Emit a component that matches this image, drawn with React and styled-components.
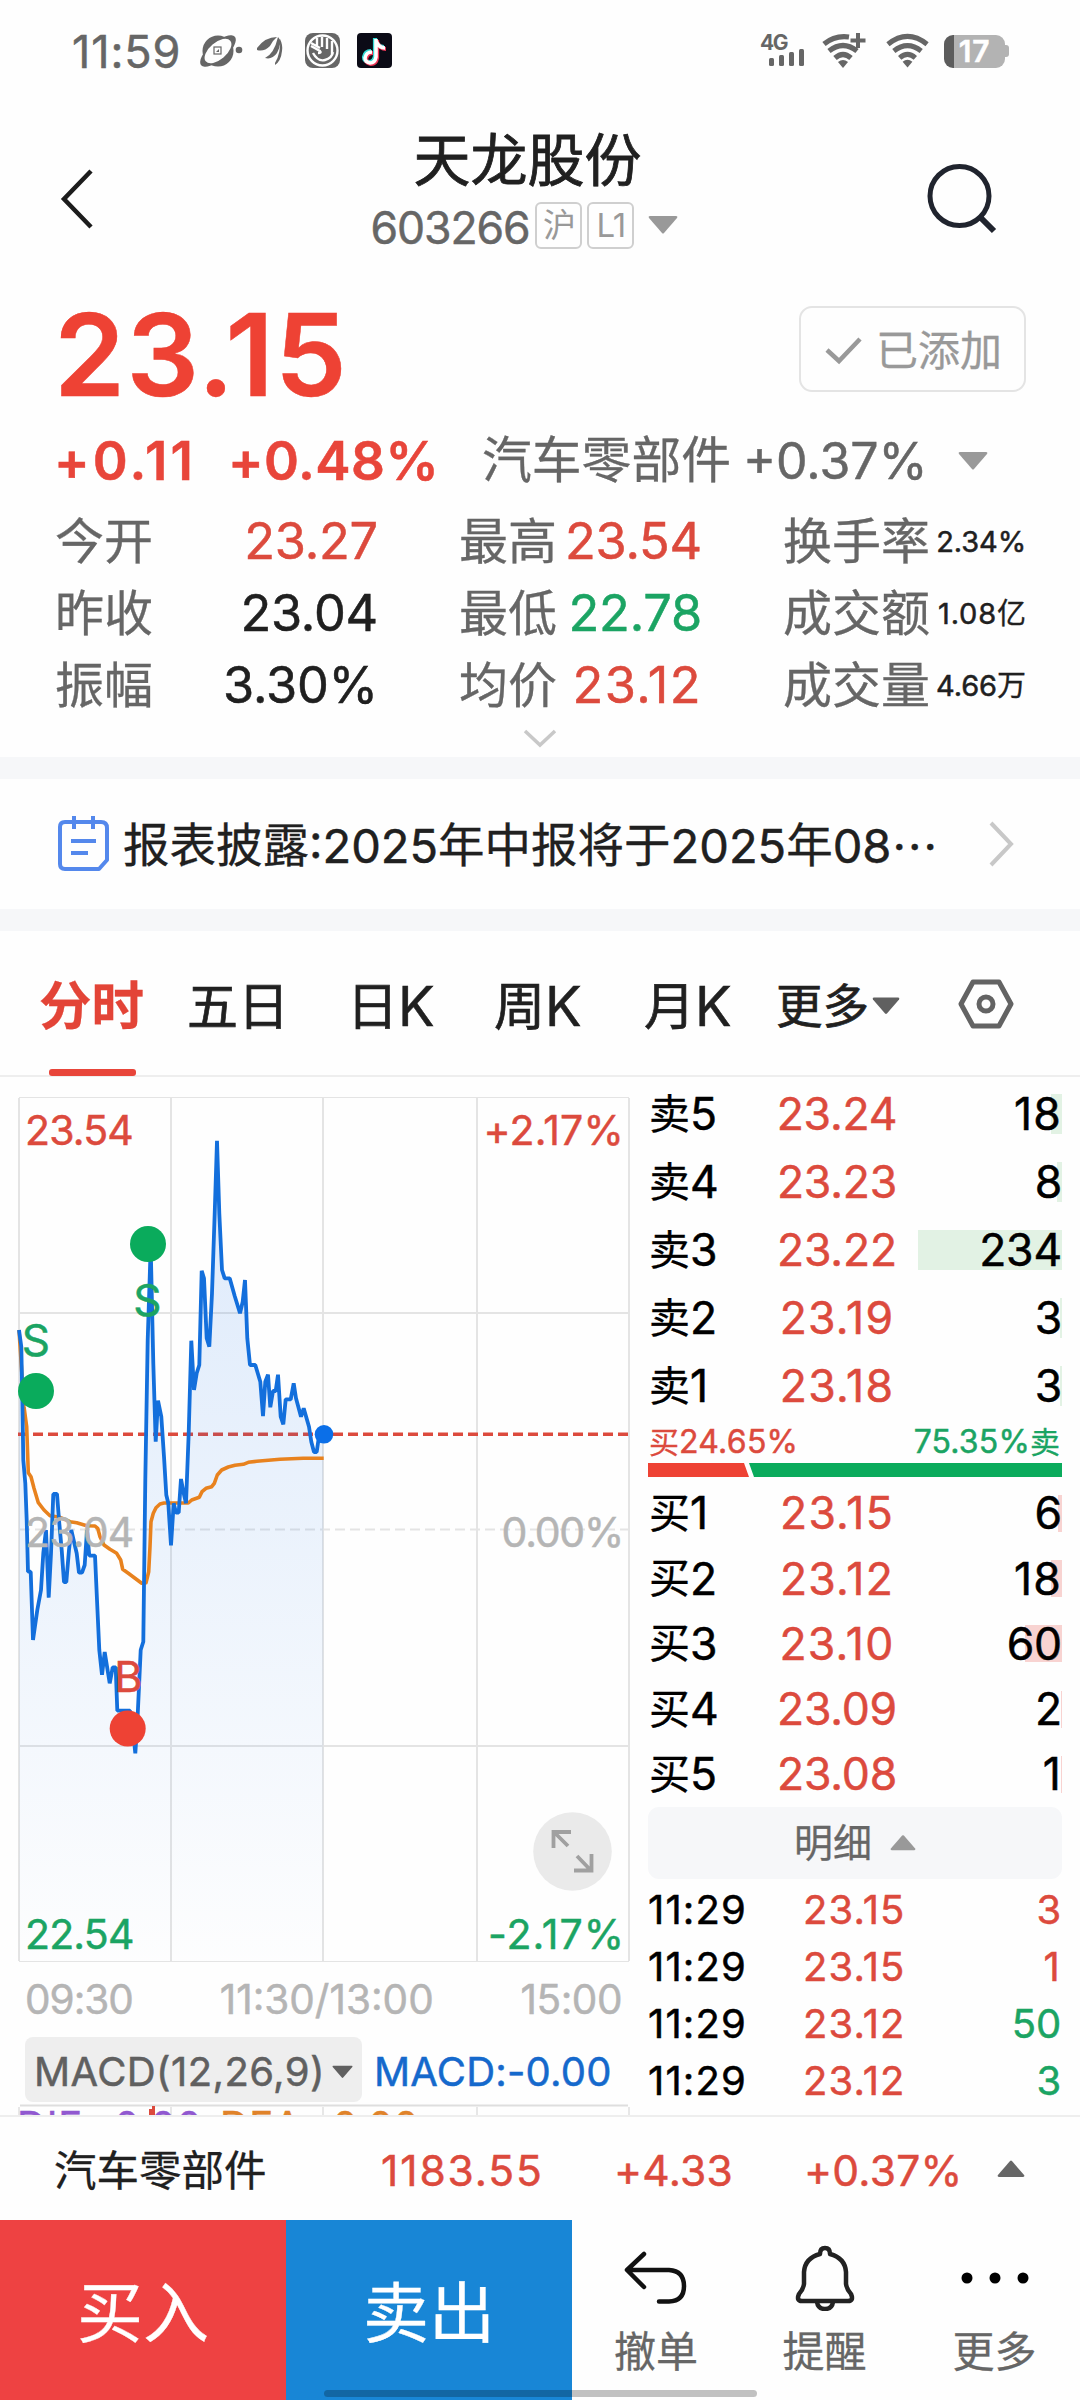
import React from "react";
import styled, { createGlobalStyle } from "styled-components";

const RED = "#dc4a3d";
const GREEN = "#1ba463";
const INK = "#202020";
const GRAY = "#666666";

const Global = createGlobalStyle`
  * { box-sizing: border-box; }
  body {
    margin: 0;
    background: #ffffff;
    font-family: Inter, "Noto Sans CJK SC", sans-serif;
    color: ${INK};
  }
  svg { display: block; flex: none; }
`;

const Screen = styled.div`
  width: 1080px;
  height: 2400px;
  overflow: hidden;
  background: #fefefe;
  display: flex;
  flex-direction: column;
`;

const Digits = styled.span`
  font-size: ${(p) => p.$size}px;
  line-height: 1;
  font-weight: ${(p) => p.$weight || 400};
  color: ${(p) => p.$color || "inherit"};
  letter-spacing: ${(p) => p.$ls}em;
  white-space: nowrap;
  -webkit-text-stroke: 0.5px;
`;

/* The figure "1" is narrow, so numbers that contain it are tracked wider. */
const Num = ({ $ls, children, ...rest }) => (
  <Digits $ls={$ls === undefined ? (/1/.test(children) ? 0.028 : -0.004) : $ls} {...rest}>
    {children}
  </Digits>
);

const Han = styled.span`
  font-size: ${(p) => p.$size}px;
  line-height: 1;
  font-weight: ${(p) => p.$weight || 400};
  color: ${(p) => p.$color || "inherit"};
  white-space: nowrap;
  -webkit-text-stroke: ${(p) => p.$stroke || 0.3}px;
`;

/* status bar */
const StatusBar = styled.div`
  height: 102px;
  padding: 0 71px 0 72px;
  display: flex;
  align-items: center;
  justify-content: space-between;
  color: ${GRAY};
`;
const StatusGroup = styled.div`
  display: flex;
  align-items: center;
`;
const ClockBox = styled.div`
  width: 127px;
  display: flex;
`;
const Battery = styled.div`
  width: 61px;
  height: 33px;
  border-radius: 9px;
  background: linear-gradient(90deg, #5c5c5c 10px, #b3b3b3 10px);
  color: #ffffff;
  display: flex;
  align-items: center;
  justify-content: center;
`;
const BatteryTip = styled.div`
  width: 4px;
  height: 12px;
  border-radius: 0 3px 3px 0;
  background: #b3b3b3;
`;

/* header */
const Header = styled.header`
  height: 178px;
  padding: 0 83px 0 60px;
  display: flex;
  justify-content: space-between;
  align-items: flex-start;
`;
const BackBox = styled.div`
  width: 302px;
  padding-top: 67px;
`;
const TitleBox = styled.div`
  width: 310px;
  display: flex;
  flex-direction: column;
  align-items: center;
`;
const Title = styled(Han)`
  margin: 30px 0 0 6px;
  line-height: 58px;
`;
const CodeRow = styled.div`
  height: 50px;
  margin-top: 10px;
  display: flex;
  align-items: center;
  color: ${GRAY};
`;
const Code = styled.div`
  padding-top: 7px;
  display: flex;
`;
const Badge = styled.span`
  width: 47px;
  height: 47px;
  margin-left: ${(p) => p.$gap}px;
  border: 2px solid #cfcfcf;
  border-radius: 6px;
  display: flex;
  align-items: center;
  justify-content: center;
  color: #999999;
  font-size: 33px;
  line-height: 1;
  letter-spacing: -0.03em;
`;
const SearchBox = styled.div`
  width: 310px;
  padding-top: 61px;
  display: flex;
  justify-content: flex-end;
`;

/* quote */
const Quote = styled.section`
  height: 477px;
  padding: 0 54px 0 54px;
`;
const PriceRow = styled.div`
  height: 150px;
  display: flex;
  align-items: center;
  justify-content: space-between;
`;
const AddedButton = styled.button`
  width: 227px;
  height: 86px;
  margin: -12px 0 0;
  padding: 4px 22px 0 24px;
  border: 2px solid #e4e4e4;
  border-radius: 13px;
  background: transparent;
  font-family: inherit;
  color: #999999;
  display: flex;
  align-items: center;
  justify-content: space-between;
`;
const ChangeRow = styled.div`
  height: 62px;
  display: flex;
  align-items: center;
  color: ${GRAY};
`;
const ChangeCell = styled.div`
  width: ${(p) => p.$w}px;
  display: flex;
  align-items: center;
`;
const Stats = styled.div`
  margin-top: 13px;
  padding-left: 1px;
  display: grid;
  grid-template-columns: 323px 243px 243px;
  grid-auto-rows: 72px;
  column-gap: 81px;
`;
const Stat = styled.div`
  display: flex;
  align-items: center;
  justify-content: space-between;
  color: ${GRAY};
`;
const ExpandRow = styled.div`
  height: 36px;
  display: flex;
  align-items: center;
  justify-content: center;
`;
const Divider = styled.div`
  height: 22px;
  background: #f6f7f9;
`;

const Notice = styled.section`
  height: 130px;
  padding: 0 65px 0 57px;
  display: flex;
  align-items: center;
`;
const NoticeText = styled.div`
  flex: 1;
  margin-left: 14px;
  padding-top: 3px;
  display: flex;
  align-items: center;
`;
const Dots = styled(Han)`
  font-family: "Noto Sans CJK SC", sans-serif;
`;

/* tabs */
const Tabs = styled.nav`
  height: 146px;
  padding-left: 39px;
  border-bottom: 2px solid #eeeeee;
  display: grid;
  grid-template-columns: 148px 160px 147px 150px 132px 182px 60px;
`;
const Tab = styled.div`
  position: relative;
  height: 146px;
  padding-top: ${(p) => (p.$icon ? 0 : 4)}px;
  display: flex;
  align-items: center;
  color: ${(p) => (p.$active ? "#e34437" : INK)};
  &::after {
    content: "";
    display: ${(p) => (p.$active ? "block" : "none")};
    position: absolute;
    left: 10px;
    bottom: 1px;
    width: 87px;
    height: 7px;
    border-radius: 3px;
    background: #e8453a;
  }
`;

/* main */
const Main = styled.section`
  height: 1040px;
  border-bottom: 2px solid #eeeeee;
  overflow: hidden;
  display: flex;
`;
const ChartPane = styled.div`
  width: 648px;
`;
const Axis = styled.div`
  height: 66px;
  padding: 0 26px 0 25px;
  display: flex;
  align-items: center;
  justify-content: space-between;
  color: #b5b5b5;
`;
const MacdRow = styled.div`
  margin-top: 4px;
  height: 65px;
  padding-left: 25px;
  display: flex;
  align-items: center;
`;
const MacdPill = styled.div`
  width: 337px;
  height: 65px;
  margin-right: 12px;
  padding: 5px 9px 0 9px;
  border-radius: 8px;
  background: #eeeeee;
  color: #606060;
  display: flex;
  align-items: center;
  justify-content: space-between;
`;
const MacdValue = styled.div`
  padding-top: 5px;
  display: flex;
`;
const SubChart = styled.svg`
  margin-top: 2px;
`;

const Book = styled.div`
  width: 414px;
  padding-top: 3px;
  color: #000000;
`;
const Level = styled.div`
  height: ${(p) => p.$h}px;
  display: grid;
  grid-template-columns: 104px 170px 140px;
  align-items: center;
`;
const LevelName = styled.div`
  display: flex;
  align-items: center;
  padding-left: 1px;
`;
const LevelPrice = styled.div`
  color: ${RED};
  display: flex;
  justify-content: center;
`;
const Volume = styled.div`
  width: 144px;
  height: ${(p) => p.$barH}px;
  margin-left: -4px;
  background: linear-gradient(${(p) => p.$tint}, ${(p) => p.$tint}) right / ${(p) => p.$bar}px 100% no-repeat;
  display: flex;
  align-items: center;
  justify-content: flex-end;
`;
const Ratio = styled.div`
  height: 43px;
  padding: 0 2px 0 1px;
  display: flex;
  align-items: center;
  justify-content: space-between;
`;
const RatioSide = styled.div`
  display: flex;
  align-items: center;
  color: ${(p) => p.$color};
`;
const Buys = styled.div`
  margin-top: 4px;
`;
const DetailToggle = styled.div`
  height: 72px;
  border-radius: 11px;
  background: #f6f7f9;
  color: ${GRAY};
  display: flex;
  align-items: center;
  justify-content: center;
  gap: 18px;
`;
const Trades = styled.div`
  margin-top: 2px;
`;
const Trade = styled.div`
  height: 57.3px;
  padding-right: 1px;
  display: grid;
  grid-template-columns: 155px 105px 153px;
  align-items: center;
`;
const TradeVol = styled.div`
  display: flex;
  justify-content: flex-end;
  color: ${(p) => p.$color};
`;

/* index strip */
const IndexBar = styled.section`
  height: 103px;
  padding: 6px 0 0 54px;
  display: grid;
  grid-template-columns: 327px 233px 190px 193px 40px;
  align-items: center;
  color: ${RED};
`;
const IndexName = styled(Han)`
  color: ${INK};
`;
const IndexArrow = styled.div`
  margin-top: -7px;
`;

/* bottom bar */
const BottomBar = styled.footer`
  position: relative;
  height: 180px;
  display: grid;
  grid-template-columns: 286px 286px 168px 169px 171px;
`;
const TradeButton = styled.button`
  border: 0;
  padding: 6px 0 0;
  background: ${(p) => p.$bg};
  color: #ffffff;
  font-family: inherit;
  display: flex;
  align-items: center;
  justify-content: center;
`;
const Action = styled.div`
  display: flex;
  flex-direction: column;
  align-items: center;
  color: ${GRAY};
`;
const ActionIcon = styled.div`
  height: 111px;
  padding-top: 4px;
  display: flex;
  align-items: center;
`;
const HomeIndicator = styled.div`
  position: absolute;
  left: 324px;
  bottom: 3px;
  width: 433px;
  height: 7px;
  border-radius: 4px;
  background: rgba(0, 0, 0, 0.24);
`;

const Triangle = ({ up, w = 30, h = 18, color = "#999999" }) => (
  <svg width={w} height={h} viewBox="0 0 30 18">
    <path d={up ? "M2 18h26q2 0 1-2L16 1q-1-1-2 0L1 16q-1 2 1 2z" : "M2 0h26q2 0 1 2L16 17q-1 1-2 0L1 2Q0 0 2 0z"} fill={color} />
  </svg>
);

const WifiIcon = ({ plus }) => (
  <svg width={plus ? 45 : 44} height="36" viewBox="0 0 45 36" fill="none" stroke="#666" strokeWidth="5.200">
    <path d={plus ? "M3 11Q14 2 28 4" : "M2 11Q22-5 42 11"} />
    <path d="M8 18Q22 7 36 18" />
    <path d="M14 25Q22 18 30 25" />
    <path d="M17 29q5-4 10 0l-5 6z" fill="#666" stroke="none" />
    {plus && <path d="M37 0v15M29.500 7.500h15" strokeWidth="4" />}
  </svg>
);

const PRICE = [
  [57,750],[64,800],[67,950],[70,1140],[76,1210],[80,1320],[84,1475],[92,1475],[99,1680],[112,1590],[123,1530],[130,1420],[138,1350],[146,1553],[153,1420],[160,1242],[171,1242],[178,1330],[185,1410],[192,1506],[199,1506],[207,1410],[214,1350],[222,1385],[230,1420],[237,1478],[246,1478],[254,1455],[261,1350],[268,1427],[285,1427],[291,1560],[298,1710],[306,1784],[314,1716],[329,1810],[338,1762],[347,1762],[352,1892],[375,1892],[390,1892],[400,1960],[406,2020],[412,1930],[422,1710],[430,1685],[436,1200],[443,780],[452,500],[460,850],[467,1085],[474,962],[484,1010],[492,1130],[499,1245],[505,1270],[513,1396],[521,1270],[528,1298],[536,1298],[543,1197],[551,1240],[558,1270],[566,1060],[574,782],[582,930],[590,880],[598,855],[605,572],[612,595],[620,775],[628,800],[636,640],[644,400],[651,182],[658,400],[666,570],[674,595],[689,595],[704,648],[720,700],[728,665],[735,600],[742,775],[750,855],[766,855],[781,905],[789,1008],[796,905],[804,884],[811,982],[819,933],[827,933],[834,884],[842,1010],[850,1033],[857,958],[872,958],[881,910],[888,955],[903,1010],[911,985],[927,1040],[934,1085],[942,1116],[950,1116],[958,1062],[970,1062],
];
const AVERAGE = [
  [57,750],[72,980],[80,1040],[85,1178],[93,1190],[102,1225],[115,1268],[132,1290],[150,1307],[180,1312],[210,1325],[230,1328],[260,1337],[285,1338],[293,1345],[300,1370],[312,1395],[330,1408],[350,1420],[362,1440],[368,1468],[385,1480],[405,1495],[425,1510],[438,1508],[446,1475],[450,1400],[453,1325],[460,1300],[468,1283],[480,1272],[492,1269],[565,1269],[575,1260],[598,1252],[606,1235],[618,1225],[635,1220],[643,1210],[652,1185],[665,1170],[685,1161],[705,1156],[730,1153],[745,1147],[770,1144],[840,1138],[910,1135],[971,1135],
];
const toPoints = (pts) => pts.map(([x, y]) => `${(x / 3).toFixed(1)},${(1080 + y / 3).toFixed(1)}`).join(" ");

const ChartText = styled.text`
  font-size: ${(p) => p.$size || 41}px;
  stroke: ${(p) => p.fill};
  stroke-width: 0.5px;
  letter-spacing: ${(p) => (p.$ls === undefined ? -0.02 : p.$ls)}em;
`;

const Chart = () => (
  <svg width="640" height="890" viewBox="0 1077 640 890">
    <defs>
      <linearGradient id="area" gradientUnits="userSpaceOnUse" x1="0" y1="1140" x2="0" y2="1961">
        <stop offset="0" stopColor="#1570e8" stopOpacity="0.14" />
        <stop offset="0.45" stopColor="#1570e8" stopOpacity="0.085" />
        <stop offset="1" stopColor="#1570e8" stopOpacity="0.005" />
      </linearGradient>
    </defs>
    <g stroke="#e4e4e4" strokeWidth="2">
      <path d="M19 1097.500H629M19 1961.500H629" strokeWidth="1.200" />
      <path d="M19 1313H629M19 1746H629M19 1098V1961M171 1098V1961M323 1098V1961M477 1098V1961M629 1098V1961" fill="none" />
      <path d="M20 1529.500H629" strokeDasharray="10 5" />
    </g>
    <path d="M18 1434.300H630" stroke={RED} strokeWidth="3.600" strokeDasharray="10 5" />
    <polygon points={`19,1961 ${toPoints(PRICE)} 323.500,1961`} fill="url(#area)" />
    <polyline points={toPoints(AVERAGE)} fill="none" stroke="#e8821e" strokeWidth="3.600" strokeLinejoin="round" />
    <polyline points={toPoints(PRICE)} fill="none" stroke="#136fdc" strokeWidth="3.800" strokeLinejoin="bevel" />
    <circle cx="324" cy="1434.300" r="9.300" fill="#0b6fe8" />
    <circle cx="36" cy="1391" r="18" fill="#0aab5c" />
    <circle cx="148" cy="1244" r="18" fill="#0aab5c" />
    <circle cx="127.700" cy="1728.500" r="18" fill="#ee4234" />
    <ChartText $size={44} x="35.500" y="1355.500" textAnchor="middle" fill={GREEN}>S</ChartText>
    <ChartText $size={44} x="147" y="1316" textAnchor="middle" fill={GREEN}>S</ChartText>
    <ChartText $size={43} x="128" y="1692" textAnchor="middle" fill={RED}>B</ChartText>
    <ChartText x="25" y="1144.500" fill={RED}>23.54</ChartText>
    <ChartText $ls={0.005} x="624" y="1144.500" textAnchor="end" fill={RED}>+2.17%</ChartText>
    <ChartText x="25" y="1546.500" fill="#b5b5b5">23.04</ChartText>
    <ChartText $ls={-0.03} x="623" y="1546.500" textAnchor="end" fill="#b5b5b5">0.00%</ChartText>
    <ChartText x="25" y="1948.500" fill={GREEN}>22.54</ChartText>
    <ChartText $ls={0.025} x="625" y="1948.500" textAnchor="end" fill={GREEN}>-2.17%</ChartText>
    <circle cx="572.500" cy="1851.500" r="39.300" fill="#eaeaea" />
    <path d="M553.500 1848V1832H571M555 1833L568 1846M591.500 1854V1870.500H574M590 1869.500L577 1856" fill="none" stroke="#a0a0a0" strokeWidth="3.800" />
  </svg>
);

const STATS = [
  ["今开", "23.27", RED], ["最高", "23.54", RED], ["换手率", "2.34%", INK, ""],
  ["昨收", "23.04", INK], ["最低", "22.78", GREEN], ["成交额", "1.08", INK, "亿"],
  ["振幅", "3.30%", INK], ["均价", "23.12", RED], ["成交量", "4.66", INK, "万"],
];
const SELLS = [["5", "23.24", "18", 11], ["4", "23.23", "8", 5], ["3", "23.22", "234", 144], ["2", "23.19", "3", 2], ["1", "23.18", "3", 2]];
const BUYS = [["1", "23.15", "6", 4], ["2", "23.12", "18", 11], ["3", "23.10", "60", 37], ["4", "23.09", "2", 1], ["5", "23.08", "1", 1]];
const TRADES = [["23.15", "3", RED], ["23.15", "1", RED], ["23.12", "50", GREEN], ["23.12", "3", GREEN]];

const Levels = ({ side, rows, h, barH, tint }) =>
  rows.map(([n, price, vol, bar]) => (
    <Level key={n} $h={h}>
      <LevelName><Han $size={41}>{side}</Han><Num $size={44.5} $ls={-0.03}>{n}</Num></LevelName>
      <LevelPrice><Num $size={44.5}>{price}</Num></LevelPrice>
      <Volume $barH={barH} $tint={tint} $bar={bar}><Num $size={44.5}>{vol}</Num></Volume>
    </Level>
  ));

export default function App() {
  return (
    <Screen>
      <Global />
      <StatusBar>
        <StatusGroup>
          <ClockBox><Num $size={45} $ls={0.02}>11:59</Num></ClockBox>
          <svg width="204" height="56" viewBox="0 0 204 56">
            <g fill="#666">
              <circle cx="19" cy="28" r="15.500" />
              <ellipse cx="19" cy="28" rx="22" ry="9" transform="rotate(-40 19 28)" />
              <ellipse cx="19" cy="28" rx="16" ry="8.500" transform="rotate(-40 19 28)" fill="#fefefe" />
              <rect x="15" y="24" width="7" height="7" fill="none" stroke="#666" strokeWidth="1.200" />
              <path d="M17 29l3-3v3z" />
              <circle cx="40" cy="27" r="3.300" />
              <path d="M58 25q8-11 20-11q-5 4-7 9q-6 6-13 4zM66 35q9-4 13-21q5 4-1 16q-5 7-12 5zM76 40q6-10 5-24q3 6 2 12q-1 10-7 14z" />
              <rect x="106" y="10" width="35" height="35" rx="8" />
            </g>
            <g fill="none" stroke="#fefefe" strokeWidth="2.400">
              <circle cx="123.500" cy="27.500" r="15" />
              <path d="M112 20l9 5M118 15v9M123 14v10M128 15v11M133 18v14M112 23l9 5q2 2-2 2M114 30q5 9 12 7q7-2 8-8" />
            </g>
            <rect x="158" y="10" width="35" height="35" rx="4" fill="#0b0b16" />
            <g fill="none" strokeWidth="4.200">
              <path d="M176 15v18q-1 6-6 6q-5-1-5-5q1-6 7-6M176 17q3 7 9 7" stroke="#35d9d4" />
              <path d="M178 17v18q-1 6-6 6q-5-1-5-5q1-6 7-6M178 19q3 7 9 7" stroke="#ee3556" />
              <path d="M177 16v18q-1 6-6 6q-5-1-5-5q1-6 7-6M177 18q3 7 9 7" stroke="#ffffff" strokeWidth="3.600" />
            </g>
          </svg>
        </StatusGroup>
        <StatusGroup>
          <svg width="61" height="50" viewBox="0 -7 61 50" fill="#666">
            <text x="0" y="17" fontSize="21" fontWeight="700" letterSpacing="-1.500">4G</text>
            <rect x="9" y="25" width="5" height="8" rx="1.500" />
            <rect x="19" y="22" width="5" height="11" rx="1.500" />
            <rect x="29" y="19" width="5" height="14" rx="1.500" />
            <rect x="39" y="16" width="5" height="17" rx="1.500" />
          </svg>
          <WifiIcon plus />
          <svg width="20" height="10" />
          <WifiIcon />
          <svg width="14" height="10" />
          <Battery><Num $size={30} $weight={600}>17</Num></Battery>
          <BatteryTip />
        </StatusGroup>
      </StatusBar>

      <Header>
        <BackBox>
          <svg width="34" height="60" viewBox="0 0 34 60" fill="none" stroke="#1c1c1c" strokeWidth="4.500">
            <path d="M31 2L4 30L31 58" />
          </svg>
        </BackBox>
        <TitleBox>
          <Title $size={57} $stroke={0.8}>天龙股份</Title>
          <CodeRow>
            <Code><Num $size={44.500} $ls={-0.025}>603266</Num></Code>
            <Badge $gap={6}>沪</Badge>
            <Badge $gap={5}>L1</Badge>
            <svg width="14" height="10" />
            <Triangle />
          </CodeRow>
        </TitleBox>
        <SearchBox>
          <svg width="72" height="72" viewBox="0 0 72 72" fill="none" stroke="#20242e" strokeWidth="5">
            <circle cx="34.500" cy="33" r="29.500" />
            <path d="M55 54L69 68" strokeWidth="6" />
          </svg>
        </SearchBox>
      </Header>

      <Quote>
        <PriceRow>
          <Num $size={114} $weight={600} $color="#ee4234" $ls={0.012}>23.15</Num>
          <AddedButton>
            <svg width="37" height="28" viewBox="0 0 37 28" fill="none" stroke="#999" strokeWidth="4.500">
              <path d="M2 13L14 24L35 2" />
            </svg>
            <Han $size={42}>已添加</Han>
          </AddedButton>
        </PriceRow>
        <ChangeRow>
          <ChangeCell $w={174}><Num $size={53} $weight={600} $color="#e8453a" $ls={0.06}>+0.11</Num></ChangeCell>
          <ChangeCell $w={254}><Num $size={53} $weight={600} $color="#e8453a" $ls={0.008}>+0.48%</Num></ChangeCell>
          <ChangeCell $w={261}><Han $size={49.800}>汽车零部件</Han></ChangeCell>
          <ChangeCell $w={215}><Num $size={50} $ls={0}>+0.37%</Num></ChangeCell>
          <Triangle />
        </ChangeRow>
        <Stats>
          {STATS.map(([label, value, color, unit]) => (
            <Stat key={label}>
              <Han $size={49}>{label}</Han>
              <span>
                <Num $size={unit === undefined ? 50.5 : 29} $color={color}>{value}</Num>
                {unit && <Han $size={29} $color={color}>{unit}</Han>}
              </span>
            </Stat>
          ))}
        </Stats>
        <ExpandRow>
          <svg width="34" height="20" viewBox="0 0 34 20" fill="none" stroke="#c8c8c8" strokeWidth="3.500">
            <path d="M2 2L17 16L32 2" />
          </svg>
        </ExpandRow>
      </Quote>

      <Divider />
      <Notice>
        <svg width="52" height="56" viewBox="0 0 52 56" fill="none" stroke="#5488ec" strokeWidth="4">
          <path d="M8 6H44Q50 6 50 12V44L42 53H8Q3 53 3 48V11Q3 6 8 6z" strokeLinejoin="round" />
          <path d="M17 0V13M36 0V13M14 25H39M14 37H31" />
        </svg>
        <NoticeText>
          <Han $size={46.500}>报表披露</Han>
          <Num $size={47} $ls={0}>:2025</Num>
          <Han $size={46.500}>年中报将于</Han>
          <Num $size={47} $ls={0}>2025</Num>
          <Han $size={46.500}>年</Han>
          <Num $size={47} $ls={0}>08</Num>
          <Dots $size={46.500}>…</Dots>
        </NoticeText>
        <svg width="26" height="46" viewBox="0 0 26 46" fill="none" stroke="#c8c8c8" strokeWidth="4">
          <path d="M2 2L22 23L2 44" />
        </svg>
      </Notice>
      <Divider />

      <Tabs>
        <Tab $active><Han $size={52.500} $weight={700}>分时</Han></Tab>
        <Tab><Han $size={51} $stroke={0.7}>五日</Han></Tab>
        <Tab><Han $size={51} $stroke={0.7}>日</Han><Num $size={54.500}>K</Num></Tab>
        <Tab><Han $size={51} $stroke={0.7}>周</Han><Num $size={54.500}>K</Num></Tab>
        <Tab><Han $size={51} $stroke={0.7}>月</Han><Num $size={54.500}>K</Num></Tab>
        <Tab><Han $size={46.500} $stroke={0.7}>更多</Han><svg width="3" height="4" /><Triangle color="#606060" w={28} /></Tab>
        <Tab $icon>
          <svg width="56" height="50" viewBox="0 0 56 50" fill="none" stroke="#636363" strokeWidth="5">
            <path d="M15 3H41L53 25L41 47H15L3 25z" strokeLinejoin="round" />
            <circle cx="28" cy="25" r="7" strokeWidth="5" />
          </svg>
        </Tab>
      </Tabs>

      <Main>
        <ChartPane>
          <Chart />
          <Axis>
            <Num $size={40.500} $ls={-0.025}>09:30</Num>
            <Num $size={40.500} $ls={0}>11:30/13:00</Num>
            <Num $size={40.500} $ls={-0.012}>15:00</Num>
          </Axis>
          <MacdRow>
            <MacdPill>
              <Num $size={40} $ls={0.01}>MACD(12,26,9)</Num>
              <Triangle w={21} h={14} color="#606060" />
            </MacdPill>
            <MacdValue><Num $size={40} $color="#1569cc" $ls={0.005}>MACD:-0.00</Num></MacdValue>
          </MacdRow>
          <SubChart width="640" height="12" viewBox="0 2104 640 12">
            <path d="M20 2105.500H628" stroke="#dedede" strokeWidth="2" />
            <path d="M19 2107V2116M171 2107V2116M323 2107V2116M477 2107V2116M629 2107V2116" stroke="#e0e0e0" strokeWidth="1.500" />
            <ChartText x="17" y="2140" fill="#9159d0" $size={40} $ls={0.02}>DIF:-0.00</ChartText>
            <ChartText x="220" y="2140" fill="#e0832a" $size={40} $ls={0.01}>DEA:-0.00</ChartText>
            <path d="M149 2116V2109H152V2106H155V2116z" fill="#dc4a3d" />
          </SubChart>
        </ChartPane>
        <Book>
          <Levels side="卖" rows={SELLS} h={68} barH={40} tint="#e2f2e4" />
          <Ratio>
            <RatioSide $color={RED}><Han $size={30}>买</Han><Num $size={32} $ls={0.008}>24.65%</Num></RatioSide>
            <RatioSide $color={GREEN}><Num $size={32} $ls={0.005}>75.35%</Num><Han $size={30}>卖</Han></RatioSide>
          </Ratio>
          <svg width="414" height="14" viewBox="0 0 414 14">
            <path d="M0 0H96L101 14H0z" fill="#ee4234" />
            <path d="M101 0H414V14H106z" fill="#0aab5c" />
          </svg>
          <Buys>
            <Levels side="买" rows={BUYS} h={65.200} barH={37} tint="#f8d3d1" />
          </Buys>
          <DetailToggle>
            <Han $size={39}>明细</Han>
            <Triangle up w={26} h={17} />
          </DetailToggle>
          <Trades>
            {TRADES.map(([price, vol, color], i) => (
              <Trade key={i}>
                <Num $size={40}>11:29</Num>
                <Num $size={40} $color={RED}>{price}</Num>
                <TradeVol $color={color}><Num $size={40}>{vol}</Num></TradeVol>
              </Trade>
            ))}
          </Trades>
        </Book>
      </Main>

      <IndexBar>
        <IndexName $size={42.500}>汽车零部件</IndexName>
        <Num $size={42.500} $ls={0.045}>1183.55</Num>
        <Num $size={42.500} $ls={0.006}>+4.33</Num>
        <Num $size={42.500} $ls={0.006}>+0.37%</Num>
        <IndexArrow><Triangle up w={28} h={19} color="#666666" /></IndexArrow>
      </IndexBar>

      <BottomBar>
        <TradeButton $bg="#ee4242"><Han $size={66}>买入</Han></TradeButton>
        <TradeButton $bg="#1886d6"><Han $size={66}>卖出</Han></TradeButton>
        <Action>
          <ActionIcon>
            <svg width="64" height="54" viewBox="0 0 64 54" fill="none" stroke="#111" strokeWidth="4.500" strokeLinecap="round" strokeLinejoin="round">
              <path d="M20 3L3 19L20 36M4 19H45Q60 20 60 35Q60 50 45 50.500H35" />
            </svg>
          </ActionIcon>
          <Han $size={42}>撤单</Han>
        </Action>
        <Action>
          <ActionIcon>
            <svg width="62" height="66" viewBox="0 0 62 66" fill="none" stroke="#222" strokeWidth="4.500" strokeLinejoin="round">
              <path d="M26 9Q26 3 31 3Q36 3 36 9Q51 13 52 27V39Q53 45 57 49Q60 56 54 56H8Q2 56 5 49Q9 45 10 39V27Q11 13 26 9z" />
              <path d="M23 57Q24 64 31 64Q38 64 39 57" />
            </svg>
          </ActionIcon>
          <Han $size={42}>提醒</Han>
        </Action>
        <Action>
          <ActionIcon>
            <svg width="68" height="12" viewBox="0 0 68 12" fill="#000">
              <circle cx="6" cy="6" r="5.500" />
              <circle cx="34" cy="6" r="5.500" />
              <circle cx="62" cy="6" r="5.500" />
            </svg>
          </ActionIcon>
          <Han $size={42}>更多</Han>
        </Action>
        <HomeIndicator />
      </BottomBar>
    </Screen>
  );
}
